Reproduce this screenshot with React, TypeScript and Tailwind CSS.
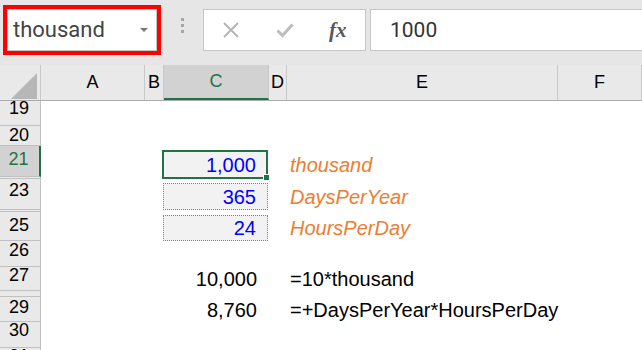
import React from "react";

const columns = [
  { label: "", w: "w-[41px]" },
  { label: "A", w: "w-[104px]" },
  { label: "B", w: "w-[19px]" },
  { label: "C", w: "w-[105px]", selected: true },
  { label: "D", w: "w-[18px]" },
  { label: "E", w: "w-[271px]" },
  { label: "F", w: "flex-1" },
];

// row header heights taken from the sheet (some rows are hidden / squashed)
const rows = [
  { n: "19", cls: "h-[25px] pt-0" },
  { n: "20", cls: "h-[20px] pt-[2px]" },
  { n: "21", cls: "h-[31px] pt-[6px]", selected: true },
  { n: "", cls: "h-[2px]" },
  { n: "23", cls: "h-[31px] pt-[4px]" },
  { n: "", cls: "h-[2px]" },
  { n: "25", cls: "h-[29px] pt-[6px]" },
  { n: "26", cls: "h-[26px] pt-[2px]" },
  { n: "27", cls: "h-[24px] pt-[1px]" },
  { n: "", cls: "h-[6px]" },
  { n: "29", cls: "h-[25px] pt-[3px]" },
  { n: "30", cls: "h-[26px] pt-[1px]" },
  { n: "31", cls: "h-[20px] pt-[1px]" },
];

function Toolbar() {
  return (
    <div className="h-[65px] bg-[#e6e6e6] flex items-start pt-[5px] pl-[3px]">
      {/* name box */}
      <div className="w-[158px] h-[50px] border-4 border-[#ff0000]">
        <div className="h-full bg-white border border-[#c6c6c6] flex items-center justify-between pl-[5px] pr-[8px]">
          <span className="font-['Roboto'] text-[22px] text-[#444] leading-none">thousand</span>
          <span className="w-0 h-0 border-l-[4px] border-r-[4px] border-t-[4px] border-l-transparent border-r-transparent border-t-[#777]" />
        </div>
      </div>
      <div className="w-[42px] h-[42px] mt-[13px] flex flex-col items-center gap-[3px]">
        <span className="w-[3px] h-[3px] bg-[#a6a6a6]" />
        <span className="w-[3px] h-[3px] bg-[#a6a6a6]" />
        <span className="w-[3px] h-[3px] bg-[#a6a6a6]" />
      </div>
      {/* cancel / enter / fx */}
      <div className="mt-[4px] w-[163px] h-[42px] bg-white border border-[#c6c6c6] flex items-center">
        <svg width="16" height="16" viewBox="0 0 16 16" className="ml-[19px]">
          <path d="M1 1 L15 15 M15 1 L1 15" stroke="#b3b3b3" strokeWidth="1.8" fill="none" />
        </svg>
        <svg width="18" height="16" viewBox="0 0 18 16" className="ml-[37px]">
          <path d="M1.5 8.5 L6.5 13.5 L16.5 2.5" stroke="#bdbdbd" strokeWidth="3" fill="none" />
        </svg>
        <span className="ml-[35px] font-['Liberation_Serif'] italic font-bold text-[21px] text-[#595959] leading-none">
          fx
        </span>
      </div>
      <div className="mt-[4px] ml-[4px] flex-1 h-[42px] bg-white border border-[#c6c6c6] border-r-0 flex items-center pl-[19px]">
        <span className="font-['Roboto'] text-[21px] text-[#333] leading-none">1000</span>
      </div>
    </div>
  );
}

function ColumnHeaders() {
  return (
    <div className="h-[36px] flex bg-[#e9e9e9] border-b border-[#ababab] font-['Liberation_Sans'] text-[18px]">
      {columns.map((c, i) => (
        <div
          key={i}
          className={`${c.w} h-full flex items-center justify-center border-r border-[#c8c8c8] ${
            c.selected ? "bg-[#d2d2d2] text-[#217346] border-b-2 border-b-[#217346]" : "text-black"
          }`}
        >
          {i === 0 ? (
            <svg width="28" height="28" viewBox="0 0 28 28" className="ml-[8px] mt-[6px]">
              <path d="M27 1 L27 27 L1 27 Z" fill="#b7b7b7" />
            </svg>
          ) : (
            c.label
          )}
        </div>
      ))}
    </div>
  );
}

function RowHeaders() {
  return (
    <div className="w-[41px] flex flex-col bg-[#e9e9e9] font-['Liberation_Sans'] text-[18px] leading-[14px] overflow-hidden">
      {rows.map((r, i) => (
        <div
          key={i}
          className={`${r.cls} shrink-0 border-b border-[#c0c0c0] text-center pr-[2px] ${
            r.selected
              ? "bg-[#d2d2d2] text-[#217346] border-r-2 border-r-[#217346]"
              : "text-black border-r border-r-[#c0c0c0]"
          }`}
        >
          {r.n}
        </div>
      ))}
    </div>
  );
}

function Cells() {
  const name = "ml-[22px] italic text-[#ed7d31]";
  return (
    <div className="flex-1 bg-white flex flex-col font-['Liberation_Sans'] text-[20px] leading-none">
      <div className="mt-[49px] h-[29px] flex items-center">
        <div className="relative ml-[121px] w-[106px] h-full border-2 border-[#217346] bg-[#f2f2f2] flex items-center justify-end pr-[10px] text-[#0000ff]">
          1,000
          <span className="absolute -right-[4px] -bottom-[4px] w-[7px] h-[7px] bg-[#217346] border border-white" />
        </div>
        <span className={name}>thousand</span>
      </div>
      <div className="mt-[4px] h-[27px] flex items-center">
        <div className="ml-[122px] w-[105px] h-full border border-dotted border-[#7f7f7f] bg-[#f2f2f2] flex items-center justify-end pr-[11px] text-[#0000ff]">
          365
        </div>
        <span className={name}>DaysPerYear</span>
      </div>
      <div className="mt-[5px] h-[26px] flex items-center">
        <div className="ml-[122px] w-[105px] h-full border border-dotted border-[#7f7f7f] bg-[#f2f2f2] flex items-center justify-end pr-[11px] text-[#0000ff]">
          24
        </div>
        <span className={name}>HoursPerDay</span>
      </div>
      <div className="mt-[26px] h-[24px] flex items-center text-black">
        <div className="ml-[122px] w-[105px] text-right pr-[11px]">10,000</div>
        <span className="ml-[22px]">=10*thousand</span>
      </div>
      <div className="mt-[6px] h-[25px] flex items-center text-black">
        <div className="ml-[122px] w-[105px] text-right pr-[11px]">8,760</div>
        <span className="ml-[22px]">=+DaysPerYear*HoursPerDay</span>
      </div>
    </div>
  );
}

export default function App() {
  return (
    <div className="w-[642px] h-[350px] overflow-hidden flex flex-col bg-white">
      <Toolbar />
      <ColumnHeaders />
      <div className="flex-1 flex overflow-hidden">
        <RowHeaders />
        <Cells />
      </div>
    </div>
  );
}
